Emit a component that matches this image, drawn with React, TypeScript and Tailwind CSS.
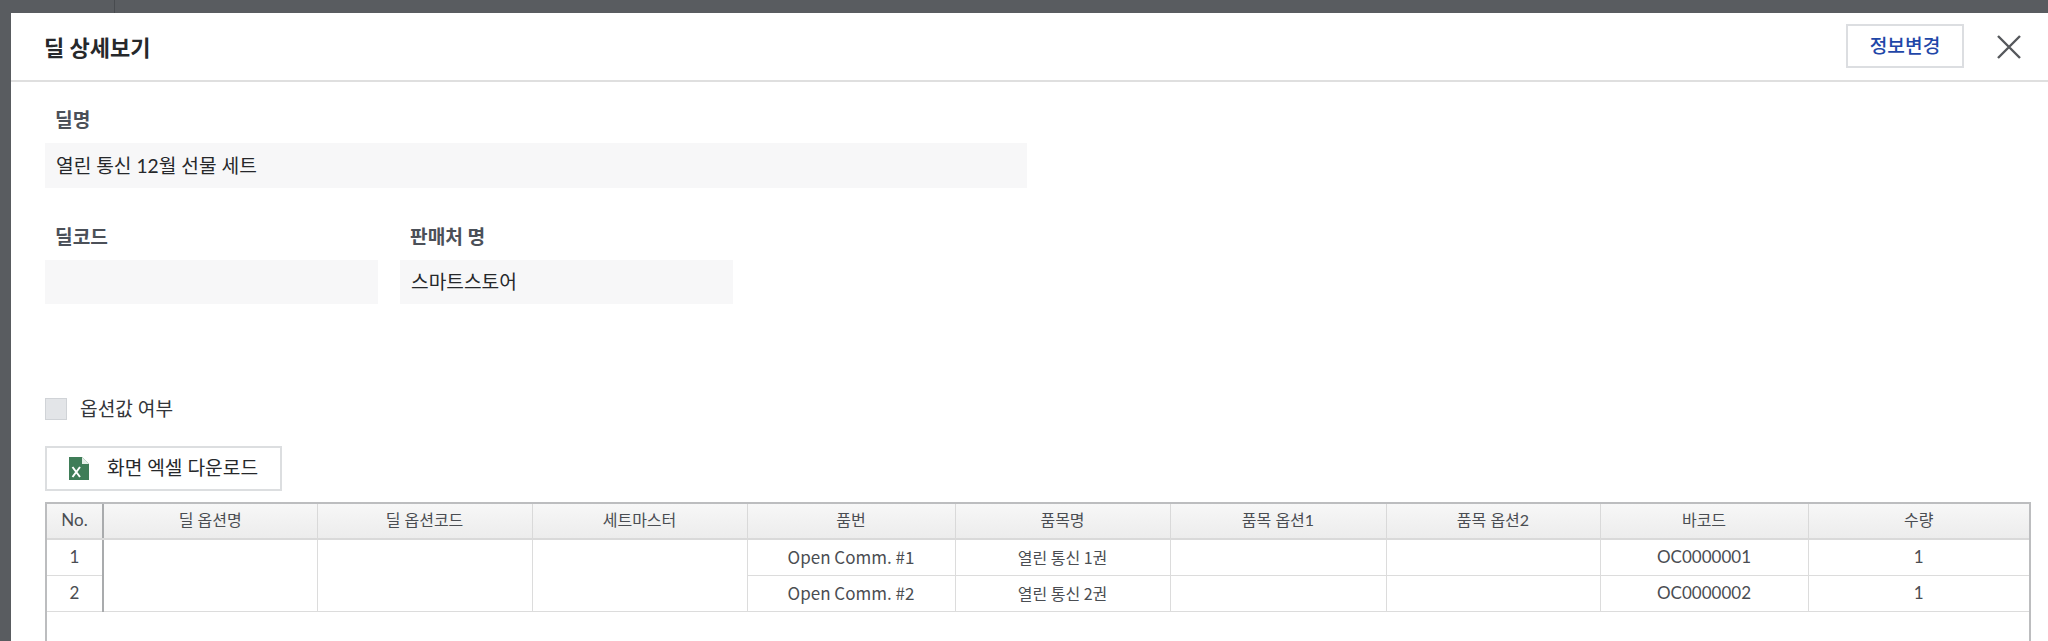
const font = { fontFamily: 'Lato, "Noto Sans CJK KR", sans-serif' };
const noto = { fontFamily: '"Noto Sans CJK KR", sans-serif' };

const cols = [56, 214, 215, 215, 208, 215, 216, 214, 208, 221];
const heads = ["No.", "딜 옵션명", "딜 옵션코드", "세트마스터", "품번", "품목명", "품목 옵션1", "품목 옵션2", "바코드", "수량"];
const rows = [
  ["Open Comm. #1", "열린 통신 1권", "OC0000001"],
  ["Open Comm. #2", "열린 통신 2권", "OC0000002"],
];

function ExcelIcon() {
  return (
    <svg width="20" height="23" viewBox="0 0 20 23" className="shrink-0">
      <path d="M0 0H13L20 7V23H0Z" fill="#3f7d58" />
      <path d="M13 0L20 7H13Z" fill="#e4efe8" />
      <path d="M3.5 10L11 20M11 10L3.5 20" stroke="#fff" strokeWidth="2" fill="none" />
    </svg>
  );
}

export default function App() {
  return (
    <div className="h-[641px] w-[2048px] overflow-hidden bg-[#595c60]" style={font}>
      <div className="ml-[104px] h-[13px] w-[11px] border-r border-[#484b4f]" />
      <div className="ml-[11px] h-[628px] bg-white">
        <header className="flex h-[69px] items-center border-b-2 border-[#dfdfdf] pl-[33px] pr-[27px]">
          <h1 className="pt-[2px] text-[22px] font-bold text-[#26282b]">딜 상세보기</h1>
          <button className="ml-auto mb-[1px] h-[44px] w-[118px] border-2 border-[#dcdee1] text-[19.2px] font-medium text-[#1f47a8]">정보변경</button>
          <svg width="24" height="24" viewBox="0 0 24 24" className="ml-[33px]">
            <path d="M1 1L23 23M23 1L1 23" stroke="#55585c" strokeWidth="2.4" fill="none" />
          </svg>
        </header>
        <div className="pl-[34px] pr-[6px]">
          <label className="mt-[25px] block pl-[10px] text-[19.2px] font-bold leading-[26px] text-[#4b5058]">딜명</label>
          <div className="mt-[10px] flex h-[45px] w-[982px] items-center bg-[#f7f7f8] pl-[11px] pt-[2px] text-[19.2px] text-[#26282b]">열린 통신 12월 선물 세트</div>
          <div className="mt-[36px] flex gap-[22px]">
            <div className="w-[333px]">
              <label className="block pl-[10px] text-[19.2px] font-bold leading-[26px] text-[#4b5058]">딜코드</label>
              <div className="mt-[10px] h-[44px] bg-[#f7f7f8]" />
            </div>
            <div className="w-[333px]">
              <label className="block pl-[10px] text-[19.2px] font-bold leading-[26px] text-[#4b5058]">판매처 명</label>
              <div className="mt-[10px] flex h-[44px] items-center bg-[#f7f7f8] pl-[11px] pt-[1px] text-[19.2px] text-[#26282b]">스마트스토어</div>
            </div>
          </div>
          <div className="mt-[94px] flex items-center gap-[13px]">
            <span className="h-[22px] w-[22px] border border-[#d0d3d7] bg-[#e3e5e8]" />
            <span className="text-[19.2px] leading-[22px] text-[#33363a]">옵션값 여부</span>
          </div>
          <button className="mt-[26px] flex h-[45px] w-[237px] items-center gap-[18px] border-2 border-[#dcdee0] pl-[22px] text-[19.2px] text-[#26282b]">
            <ExcelIcon />
            화면 엑셀 다운로드
          </button>
          <div className="mt-[11px] mr-[11px] h-[200px] border-2 border-[#bcbdbf] border-b-0">
            <table className="w-full table-fixed border-collapse text-[16px] text-[#4a4d52]">
              <colgroup>
                {cols.map((w, i) => (
                  <col key={i} style={{ width: w }} />
                ))}
              </colgroup>
              <thead>
                <tr className="h-[35px] bg-gradient-to-b from-[#f7f7f7] to-[#ececec]">
                  {heads.map((h, i) => (
                    <th key={h} className={`border-b-2 border-[#d9d9d9] pb-[2px] font-normal ${i === 0 ? "border-r-2 border-r-[#a9abad] text-[17px]" : i === 9 ? "" : "border-r border-r-[#d9d9d9]"}`}>
                      {h}
                    </th>
                  ))}
                </tr>
              </thead>
              <tbody>
                {rows.map((r, i) => (
                  <tr key={i} className="h-[36px]">
                    <td className="border-b border-r-2 border-[#dcdcdc] border-r-[#a9abad] pb-[1px] text-center text-[17px]">{i + 1}</td>
                    {i === 0 && (
                      <>
                        <td rowSpan={2} className="border-b border-r border-[#dcdcdc]" />
                        <td rowSpan={2} className="border-b border-r border-[#dcdcdc]" />
                        <td rowSpan={2} className="border-b border-r border-[#dcdcdc]" />
                      </>
                    )}
                    <td className="border-b border-r border-[#dcdcdc] pb-[1px] text-center text-[17px]" style={noto}>{r[0]}</td>
                    <td className="border-b border-r border-[#dcdcdc] pb-[1px] text-center" style={noto}>{r[1]}</td>
                    <td className="border-b border-r border-[#dcdcdc]" />
                    <td className="border-b border-r border-[#dcdcdc]" />
                    <td className="border-b border-r border-[#dcdcdc] pb-[1px] text-center text-[17px]">{r[2]}</td>
                    <td className="border-b border-[#dcdcdc] pb-[1px] text-center text-[17px]">1</td>
                  </tr>
                ))}
              </tbody>
            </table>
          </div>
        </div>
      </div>
    </div>
  );
}
